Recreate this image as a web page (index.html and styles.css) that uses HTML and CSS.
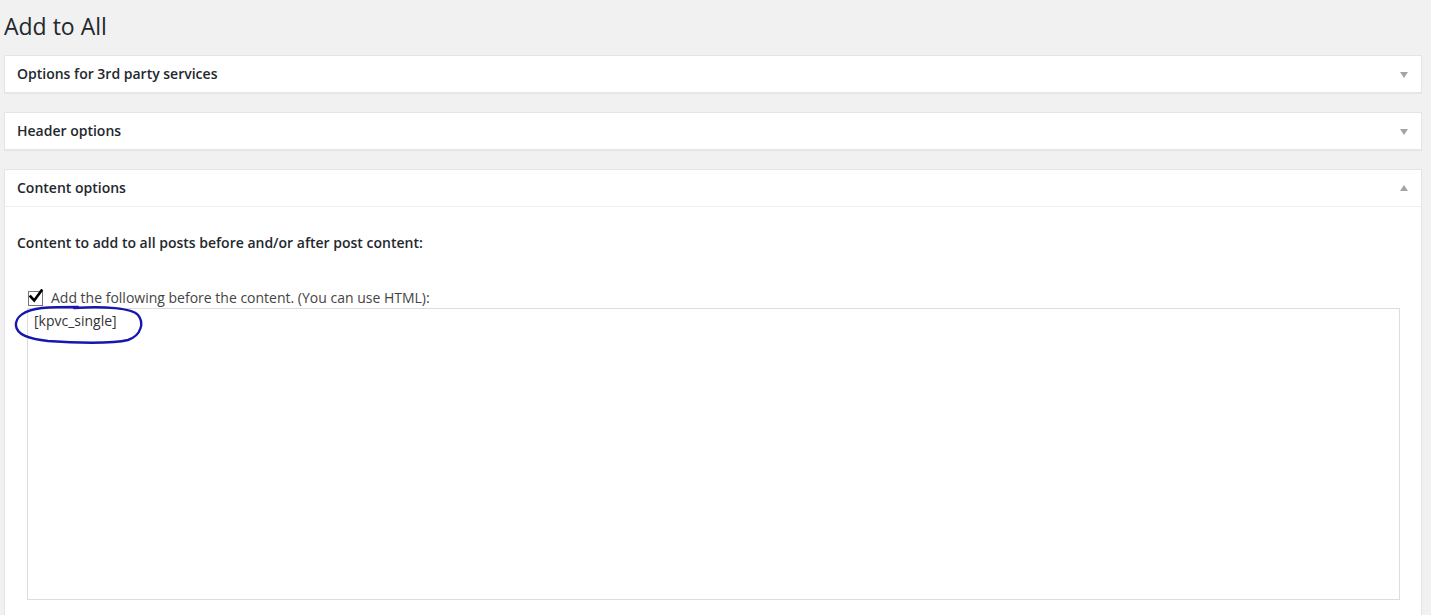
FILE: index.html
```html
<!DOCTYPE html>
<html lang="en">
<head>
<meta charset="utf-8">
<title>Add to All</title>
<link rel="stylesheet" href="styles.css">
</head>
<body>
<div class="wrap">
  <h1 class="page-title">Add to All</h1>

  <div class="postbox">
    <div class="hndle">
      <span>Options for 3rd party services</span>
      <span class="toggle down"></span>
    </div>
  </div>

  <div class="postbox">
    <div class="hndle">
      <span>Header options</span>
      <span class="toggle down"></span>
    </div>
  </div>

  <div class="postbox open">
    <div class="hndle">
      <span>Content options</span>
      <span class="toggle up"></span>
    </div>
    <div class="inside">
      <p class="section-label">Content to add to all posts before and/or after post content:</p>
      <div class="field">
        <label class="check-row">
          <span class="checkbox"><svg viewBox="0 0 16 16" width="16" height="16"><path d="M2.5 7.5 L6.2 11.5 L13.5 1.5" fill="none" stroke="#000" stroke-width="2.6" stroke-linecap="square"/></svg></span>
          <span>Add the following before the content. (You can use HTML):</span>
        </label>
        <div class="editor">
          <textarea class="code">[kpvc_single]</textarea>
          <svg class="mark" width="134" height="42" viewBox="0 0 134 42">
            <path d="M62 4 C92 2 120 4 126 11 C132 18 130 31 116 36 C100 40 62 39 36 37 C16 35 5 30 4 22 C3 13 12 6 30 4 C42 3 54 3 66 3" fill="none" stroke="#1717b0" stroke-width="2.4" stroke-linecap="round"/>
          </svg>
        </div>
      </div>
    </div>
  </div>
</div>
</body>
</html>
```

FILE: styles.css
```css
html, body {
  margin: 0;
  padding: 0;
  background: #f1f1f1;
  font-family: "Open Sans", "Noto Sans", sans-serif;
  color: #23282d;
  overflow: hidden;
}

.wrap {
  padding: 0 9px 0 4px;
}

.page-title {
  margin: 0;
  padding: 12px 0 0 0;
  font-size: 23px;
  font-weight: 400;
  line-height: 29px;
  height: 43px;
  color: #23282d;
}

.postbox {
  background: #fff;
  border: 1px solid #e5e5e5;
  box-shadow: 0 1px 1px rgba(0, 0, 0, 0.04);
  margin-bottom: 19px;
}

.hndle {
  display: flex;
  align-items: center;
  justify-content: space-between;
  height: 36px;
  padding: 0 12px 1px;
  box-sizing: border-box;
  font-size: 14px;
  font-weight: 600;
  color: #23282d;
}

.open .hndle {
  border-bottom: 1px solid #eee;
  height: 37px;
}

.toggle {
  width: 0;
  height: 0;
  border-left: 4px solid transparent;
  border-right: 4px solid transparent;
  margin-right: 1px;
}

.toggle.down {
  border-top: 6px solid #a0a5aa;
  margin-top: 2px;
}

.toggle.up {
  border-bottom: 6px solid #a0a5aa;
}

.inside {
  padding: 26px 12px 40px;
}

.section-label {
  margin: 0 0 35px;
  font-size: 14px;
  font-weight: 600;
  line-height: 20px;
  color: #23282d;
}

.field {
  margin: 0 9px 0 10px;
}

.check-row {
  display: flex;
  align-items: center;
  gap: 8px;
  height: 20px;
  font-size: 14px;
  color: #444;
  line-height: 20px;
}

.checkbox {
  width: 13px;
  height: 13px;
  border: 1px solid #767676;
  position: relative;
  margin-left: 1px;
  background: #fff;
}

.checkbox svg {
  position: absolute;
  left: -1px;
  top: -3px;
}

.editor {
  position: relative;
}

.code {
  display: block;
  box-sizing: border-box;
  width: 100%;
  height: 292px;
  margin: 0;
  padding: 2px 6px;
  border: 1px solid #ddd;
  resize: none;
  font-family: "Open Sans", "Noto Sans", sans-serif;
  font-size: 14px;
  line-height: 20px;
  color: #333;
  background: #fff;
  outline: none;
}

.mark {
  position: absolute;
  left: -15px;
  top: -4px;
  pointer-events: none;
}
```
